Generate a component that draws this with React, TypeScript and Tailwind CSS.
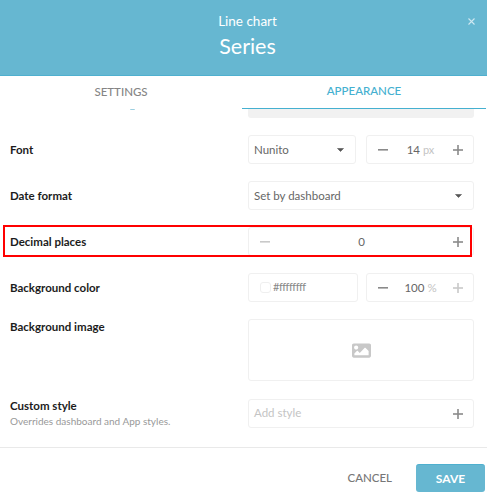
import { FaImage } from "react-icons/fa"

function Minus({ className = "text-[#8a8a8a]" }: { className?: string }) {
  return (
    <svg width="10" height="10" viewBox="0 0 10 10" className={className}>
      <rect x="0" y="4" width="10" height="1.6" fill="currentColor" />
    </svg>
  )
}

function PlusIcon({ className = "text-[#8a8a8a]" }: { className?: string }) {
  return (
    <svg width="10" height="10" viewBox="0 0 10 10" className={className}>
      <rect x="0" y="4.2" width="10" height="1.6" fill="currentColor" />
      <rect x="4.2" y="0" width="1.6" height="10" fill="currentColor" />
    </svg>
  )
}

function Caret() {
  return (
    <svg width="7" height="4" viewBox="0 0 7 4" className="text-[#555]">
      <path d="M0.5 0.5h6L3.5 3.5z" fill="currentColor" stroke="currentColor" strokeWidth="0.6" strokeLinejoin="round" />
    </svg>
  )
}

function Row({ label, sub, children }: { label: string; sub?: string; children: React.ReactNode }) {
  return (
    <div className="flex items-center justify-between pl-[10px] pr-[13px]">
      <div>
        <div className="text-[11.5px] font-bold leading-[14px] text-[#1c1c1c]">{label}</div>
        {sub && <div className="mt-[2px] text-[10px] leading-[13px] text-[#999]">{sub}</div>}
      </div>
      <div className="w-[226px]">{children}</div>
    </div>
  )
}

const box = "flex h-[29px] items-center rounded-[3px] border border-[#f0f0f0] text-[11.5px] text-[#666]"

export default function App() {
  return (
    <div className="relative h-[499px] w-[487px] overflow-hidden bg-white font-['Lato',sans-serif]">
      {/* Header */}
      <div className="relative flex h-[76px] flex-col items-center border-b border-[#4fb0cf] bg-[#66b7d1] pl-[8px] text-white">
        <div className="mt-[12px] text-[13.5px] leading-[18px]">Line chart</div>
        <div className="mt-[3px] text-[21.5px] leading-[27px]">Series</div>
        <svg width="7" height="7" viewBox="0 0 7 7" className="absolute right-[12px] top-[18px] text-[#cfe8f1]">
          <path d="M0.5 0.5l6 6M6.5 0.5l-6 6" stroke="currentColor" strokeWidth="1.1" />
        </svg>
      </div>

      {/* Tabs */}
      <div className="flex h-[33px] text-[11.5px] font-medium">
        <div className="flex w-[242px] items-center justify-center pb-[2px] text-[#858585]">SETTINGS</div>
        <div className="flex w-[244px] items-center justify-center border-b border-[#45b0d0] pb-[2px] text-[#45b0d0]">APPEARANCE</div>
      </div>

      {/* Scrolled content edge */}
      <div className="flex pl-[130px] pr-[13px]">
        <div className="h-[1px] w-[5px] rounded-b bg-[#9ccfe0]" />
        <div className="ml-[113px] h-[9px] w-[226px] rounded-b-[3px] bg-[#f1f1f1]" />
      </div>

      <div className="mt-[17px] flex flex-col gap-[17px]">
        <Row label="Font">
          <div className="flex justify-between">
            <div className={`${box} w-[108px] justify-between pl-[5px] pr-[11px]`}>
              <span>Nunito</span>
              <Caret />
            </div>
            <div className={`${box} w-[108px] justify-between pl-[11px] pr-[10px]`}>
              <Minus />
              <span>
                14 <span className="text-[11px] text-[#c4c4c4]">px</span>
              </span>
              <PlusIcon />
            </div>
          </div>
        </Row>

        <Row label="Date format">
          <div className={`${box} justify-between pl-[5px] pr-[11px]`}>
            <span>Set by dashboard</span>
            <Caret />
          </div>
        </Row>

        <Row label="Decimal places">
          <div className={`${box} justify-between pl-[11px] pr-[10px]`}>
            <Minus className="text-[#c9c9c9]" />
            <span>0</span>
            <PlusIcon />
          </div>
        </Row>

        <Row label="Background color">
          <div className="flex justify-between">
            <div className={`${box} w-[110px] pl-[11px]`}>
              <span className="mr-[2px] h-[11px] w-[11px] rounded-[3px] border border-[#efefef]" />
              <span className="text-[11px] tracking-[-0.5px] text-[#888]">#ffffffff</span>
            </div>
            <div className={`${box} w-[108px] justify-between pl-[11px] pr-[10px]`}>
              <Minus />
              <span>
                100 <span className="text-[#c4c4c4]">%</span>
              </span>
              <PlusIcon className="text-[#c9c9c9]" />
            </div>
          </div>
        </Row>

        <div className="flex items-start justify-between pl-[10px] pr-[13px]">
          <div className="pt-[1px] text-[11.5px] font-bold leading-[14px] text-[#1c1c1c]">Background image</div>
          <div className="flex h-[62px] w-[226px] items-center justify-center rounded-[3px] border border-[#f0f0f0]">
            <FaImage className="text-[19px] text-[#c8c8c8]" />
          </div>
        </div>
      </div>

      <div className="mt-[18px]">
        <Row label="Custom style" sub="Overrides dashboard and App styles.">
          <div className={`${box} justify-between pl-[5px] pr-[10px] text-[#c4c4c4]`}>
            <span className="pb-[1px]">Add style</span>
            <PlusIcon />
          </div>
        </Row>
      </div>

      {/* Footer */}
      <div className="mt-[19px] border-t border-[#e9e9e9]">
        <div className="flex items-center justify-end gap-[24px] pr-[2px] pt-[16px]">
          <span className="text-[11.5px] font-medium text-[#777]">CANCEL</span>
          <button className="h-[28px] w-[69px] rounded-[3px] border-t border-[#4fb0cf] bg-[#66b7d1] text-[12px] font-bold text-white">
            SAVE
          </button>
        </div>
      </div>

      {/* Highlight annotation */}
      <div className="absolute left-[3px] top-[225px] h-[32px] w-[469px] border-2 border-[#ff0000]" />
    </div>
  )
}
